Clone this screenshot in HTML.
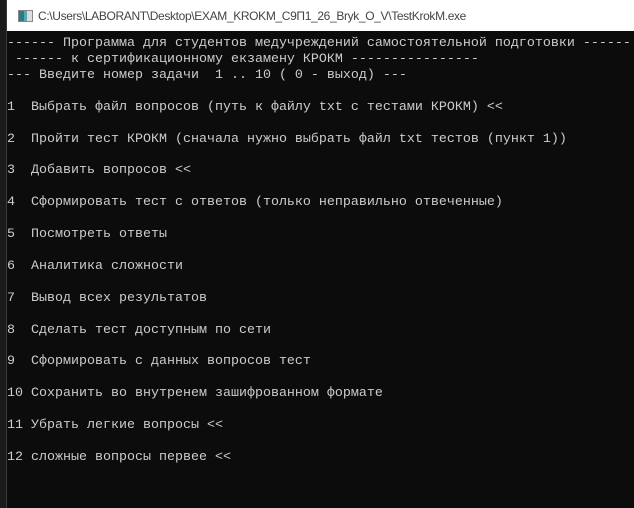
<!DOCTYPE html>
<html><head><meta charset="utf-8"><style>
html,body{margin:0;padding:0;width:634px;height:508px;overflow:hidden;background:#0c0c0c;}
#strip{position:absolute;left:0;top:0;width:6px;height:508px;background:#1b1b1b;border-right:1px solid #3a3a3a;}
#title{position:absolute;left:7px;top:0;width:627px;height:31px;background:#fff;}
#ico{position:absolute;left:11px;top:10px;width:13px;height:10px;border:1px solid #888;background:linear-gradient(90deg,#2a7a8a 0 40%,#5aa 40% 60%,#ddd 60%);}
#tt{position:absolute;left:31px;top:9px;font:12px "Liberation Sans",sans-serif;color:#444;white-space:nowrap;letter-spacing:-0.35px;}
#con{position:absolute;left:7px;top:36px;font-family:"Liberation Mono","DejaVu Sans Mono",monospace;font-size:13.33px;line-height:15.92px;color:#cccccc;white-space:pre;margin:0;}
</style></head><body>
<div id="strip"></div>
<div id="title"><div id="ico"></div><div id="tt">C:\Users\LABORANT\Desktop\EXAM_KROKM_C9П1_26_Bryk_O_V\TestKrokM.exe</div></div>
<pre id="con">------ Программа для студентов медучреждений самостоятельной подготовки ------
 ------ к сертификационному екзамену КРОКМ ----------------
--- Введите номер задачи  1 .. 10 ( 0 - выход) ---

1  Выбрать файл вопросов (путь к файлу txt с тестами КРОКМ) &lt;&lt;

2  Пройти тест КРОКМ (сначала нужно выбрать файл txt тестов (пункт 1))

3  Добавить вопросов &lt;&lt;

4  Сформировать тест с ответов (только неправильно отвеченные)

5  Посмотреть ответы

6  Аналитика сложности

7  Вывод всех результатов

8  Сделать тест доступным по сети

9  Сформировать с данных вопросов тест

10 Сохранить во внутренем зашифрованном формате

11 Убрать легкие вопросы &lt;&lt;

12 сложные вопросы первее &lt;&lt;</pre>
</body></html>
